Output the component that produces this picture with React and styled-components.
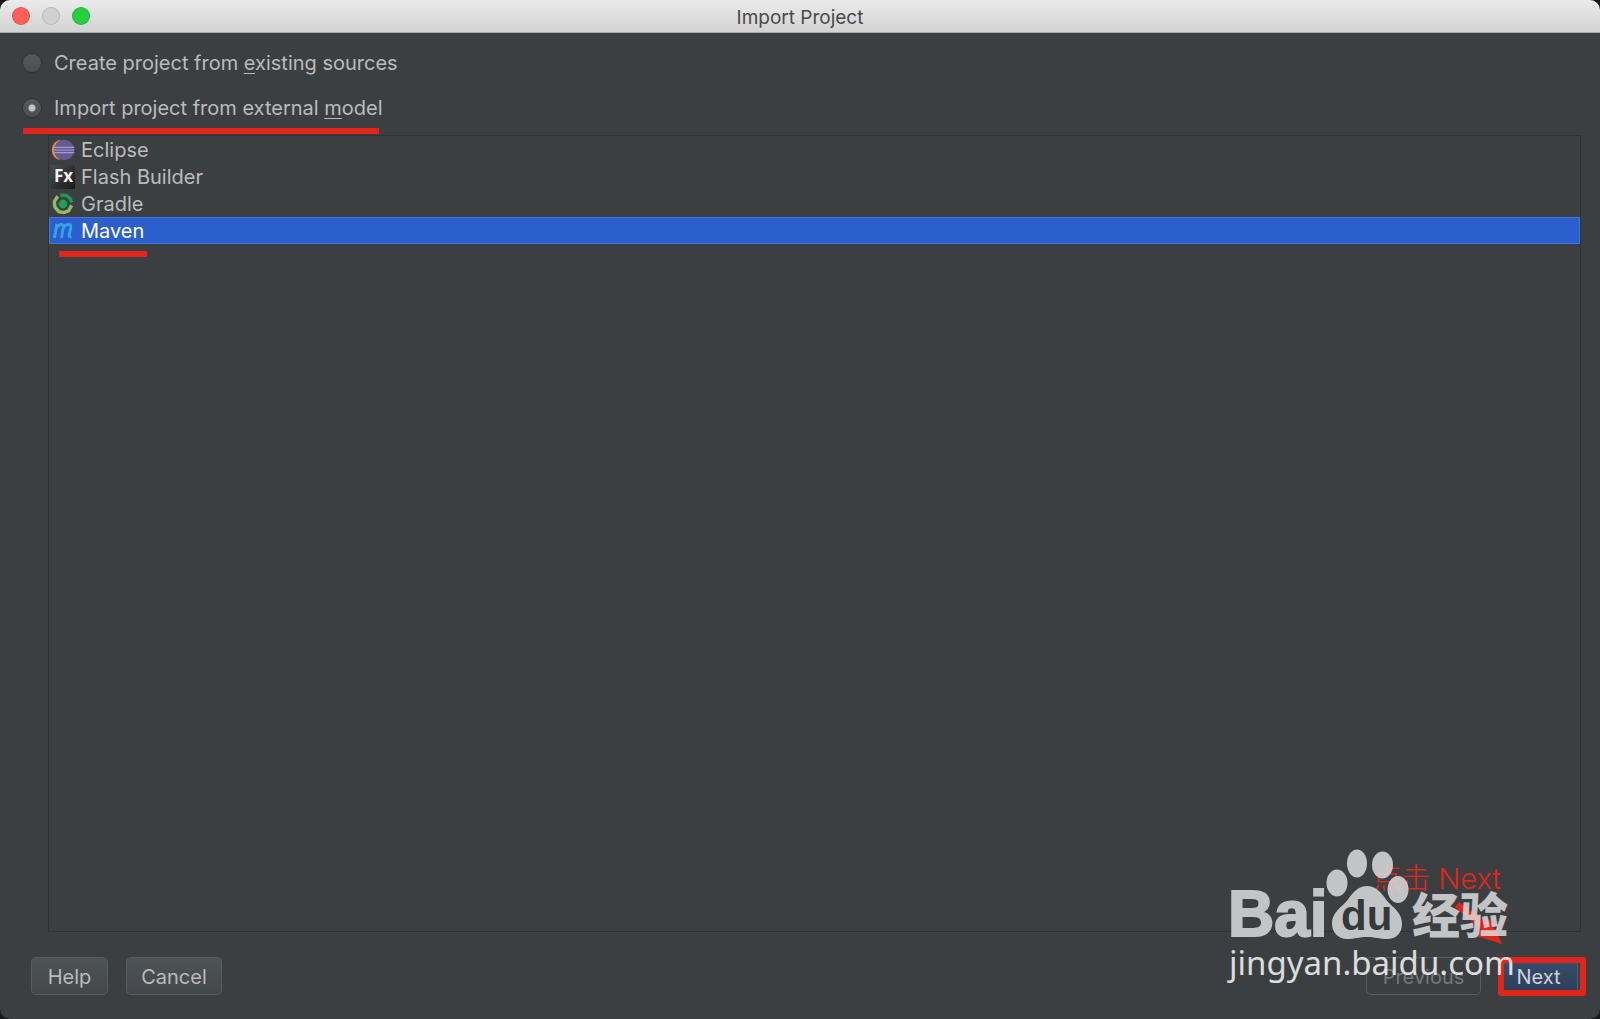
import React, { useState } from 'react';
import styled, { createGlobalStyle } from 'styled-components';

const models = ['Eclipse', 'Flash Builder', 'Gradle', 'Maven'];

const EclipseIcon = () => (
  <svg width='24' height='24' viewBox='0 0 24 24' aria-hidden='true'>
    <path d='M10 1.5A10.6 10.6 0 0 0 10 22.5A13 13 0 0 1 10 1.5z' fill='#e8913a' />
    <circle cx='13' cy='12' r='10.2' fill='#665a96' />
    <path d='M3 9.4h20.3M3 12h20.3M3 14.6h20.3' stroke='#a59dc6' strokeWidth='1.2' />
  </svg>
);

const FlashIcon = () => (
  <svg width='24' height='24' viewBox='0 0 24 24' aria-hidden='true'>
    <defs>
      <linearGradient id='flash' x1='0' y1='0' x2='1' y2='1'>
        <stop offset='0' stopColor='#4c4c4c' />
        <stop offset='1' stopColor='#191919' />
      </linearGradient>
    </defs>
    <rect width='24' height='24' fill='url(#flash)' />
    <text x='3' y='17' fontFamily='Open Sans, sans-serif' fontWeight='700' fontSize='17' fill='#f2f2f2'>
      Fx
    </text>
  </svg>
);

const GradleIcon = () => (
  <svg width='24' height='24' viewBox='0 0 24 24' aria-hidden='true'>
    <circle cx='12' cy='12' r='4.4' fill='#1fa055' />
    <path
      d='M6.8 4.2L3.4 9.4L3.8 14.8L7.8 19.6L13 20.6L17.6 18.8L20.6 13.4'
      fill='none'
      stroke='#8fbc62'
      strokeWidth='3.4'
    />
    <path d='M9.4 3L15.6 3.6L19.2 6.8L20.8 10.4' fill='none' stroke='#1f9a54' strokeWidth='3.4' />
  </svg>
);

const MavenIcon = () => (
  <svg width='24' height='24' viewBox='0 0 24 24' aria-hidden='true'>
    <path
      d='M3.4 19L6 5M5.4 9C7.6 4.8 13 4 12.4 8.2L10.4 19M12 9C14.4 4.8 20.4 4 19.8 8.2L18.2 16Q17.8 18.4 20.4 17.6'
      fill='none'
      stroke='#36a3e6'
      strokeWidth='2.9'
    />
  </svg>
);

const icons = {
  Eclipse: EclipseIcon,
  'Flash Builder': FlashIcon,
  Gradle: GradleIcon,
  Maven: MavenIcon,
};

function Watermark() {
  return (
    <WatermarkSvg width='300' height='150' viewBox='0 0 300 150' aria-label='Baidu'>
      <g fill='#e0e2e4'>
        <text
          x='4'
          y='87'
          fontFamily='Liberation Sans, sans-serif'
          fontWeight='700'
          fontSize='64'
          stroke='#e0e2e4'
          strokeWidth='2'
        >
          Bai
        </text>
        <ellipse cx='113' cy='34' rx='10.5' ry='13.5' />
        <ellipse cx='133' cy='14.5' rx='10' ry='14' />
        <ellipse cx='158.5' cy='16' rx='10.5' ry='13.5' />
        <ellipse cx='174' cy='40.5' rx='10.5' ry='13.5' />
        <path d='M143 37C151 37 156 42 161 49C167 58 178 62 178 75C178 84 172 90 163 90C155 90 151 88 143 88C135 88 131 90 123 90C114 90 108 83 108 75C108 62 119 58 125 49C130 42 135 37 143 37z' />
        <text x='188' y='84' fontFamily='Noto Sans CJK SC, sans-serif' fontWeight='900' fontSize='48'>
          经验
        </text>
      </g>
      <text x='117' y='81' fontFamily='Liberation Sans, sans-serif' fontWeight='700' fontSize='42' fill='#33373a'>
        du
      </text>
      <text x='5' y='126' fontFamily='Noto Sans, sans-serif' fontSize='33' fill='#ffffff'>
        jingyan.baidu.com
      </text>
    </WatermarkSvg>
  );
}

function App() {
  const [source, setSource] = useState('import');
  const [model, setModel] = useState('Maven');

  return (
    <>
      <GlobalStyle />
      <Window>
        <TitleBar>
          <Lights>
            <Light $color='#ff5f57' aria-label='Close' />
            <Light $color='#d0d0d0' aria-label='Minimize' />
            <Light $color='#28cd41' aria-label='Zoom' />
          </Lights>
          <h1>Import Project</h1>
        </TitleBar>
        <Content>
          <RadioRow>
            <input
              type='radio'
              name='source'
              checked={source === 'create'}
              onChange={() => setSource('create')}
            />
            <span>
              Create project from <u>e</u>xisting sources
            </span>
          </RadioRow>
          <RadioRow>
            <input
              type='radio'
              name='source'
              checked={source === 'import'}
              onChange={() => setSource('import')}
            />
            <span>
              Import project from external <u>m</u>odel
            </span>
            <Underline $left={1} $bottom={-4} $width={356} />
          </RadioRow>
          <ModelList role='listbox' aria-label='External model'>
            {models.map((name) => {
              const Icon = icons[name];
              return (
                <ModelItem
                  key={name}
                  role='option'
                  aria-selected={model === name}
                  $selected={model === name}
                  onClick={() => setModel(name)}
                >
                  <Icon />
                  <span>{name}</span>
                  {name === 'Maven' && <Underline $left={9} $bottom={-14} $width={88} />}
                </ModelItem>
              );
            })}
          </ModelList>
        </Content>
        <Footer>
          <Button $width={77}>Help</Button>
          <Button $width={96}>Cancel</Button>
          <Spacer />
          <Button $width={115} disabled>
            Previous
          </Button>
          <NextSlot>
            <Button $width={79} $primary>
              Next
            </Button>
          </NextSlot>
          <Note>点击 Next</Note>
          <Arrow width='50' height='44' viewBox='0 0 50 44' aria-hidden='true'>
            <path d='M5 1L31 21L36 18L48 43L23 35L27 28L1 6z' fill='#e0261b' />
          </Arrow>
          <Watermark />
        </Footer>
      </Window>
    </>
  );
}

const GlobalStyle = createGlobalStyle`
  * {
    box-sizing: border-box;
  }
  body {
    margin: 0;
    background: #17191a;
    font-family: Inter, 'Noto Sans CJK SC', sans-serif;
    font-size: 20px;
    color: #bbbbbb;
  }
`;

const Window = styled.main`
  display: flex;
  flex-direction: column;
  min-height: 100vh;
  overflow: hidden;
  background: #3c3f41;
  border-radius: 10px;
`;

const TitleBar = styled.header`
  position: relative;
  display: flex;
  align-items: center;
  justify-content: center;
  height: 33px;
  background: linear-gradient(#ebebeb, #d3d3d3);
  border-bottom: 1px solid #a9a9a9;
  h1 {
    margin: 0;
    padding-top: 2px;
    font-size: 19px;
    font-weight: 400;
    color: #4a4a4a;
  }
`;

const Lights = styled.div`
  position: absolute;
  left: 12px;
  display: flex;
  gap: 12px;
`;

const Light = styled.button`
  width: 18px;
  height: 18px;
  padding: 0;
  background: ${({ $color }) => $color};
  border: 1px solid rgba(0, 0, 0, 0.12);
  border-radius: 50%;
`;

const Content = styled.section`
  flex: 1;
  display: flex;
  flex-direction: column;
  padding: 7px 19px 0 22px;
`;

const RadioRow = styled.label`
  position: relative;
  align-self: flex-start;
  display: flex;
  align-items: center;
  gap: 12px;
  height: 45px;
  input {
    appearance: none;
    width: 20px;
    height: 20px;
    margin: 0;
    background: linear-gradient(#55595b, #4c5052);
    border: 1px solid #2f3233;
    border-radius: 50%;
  }
  input:checked {
    background: radial-gradient(circle, #c4c4c4 3px, transparent 4px),
      linear-gradient(#55595b, #4c5052);
  }
  u {
    text-decoration-thickness: 1px;
    text-underline-offset: 3px;
  }
`;

const Underline = styled.i`
  position: absolute;
  left: ${({ $left }) => $left}px;
  bottom: ${({ $bottom }) => $bottom}px;
  z-index: 1;
  width: ${({ $width }) => $width}px;
  height: 6px;
  background: #e0261b;
`;

const ModelList = styled.ul`
  flex: 1;
  margin: 5px 0 0 26px;
  padding: 0;
  list-style: none;
  border: 1px solid #2f3233;
`;

const ModelItem = styled.li`
  position: relative;
  display: flex;
  align-items: center;
  gap: 6px;
  height: 27px;
  padding-left: 1px;
  border: 1px solid ${({ $selected }) => ($selected ? '#3f79dc' : 'transparent')};
  background: ${({ $selected }) => ($selected ? '#2b5fce' : 'transparent')};
  color: ${({ $selected }) => ($selected ? '#ffffff' : '#bbbbbb')};
`;

const Footer = styled.footer`
  position: relative;
  display: flex;
  align-items: center;
  gap: 18px;
  height: 87px;
  padding: 0 22px 0 31px;
`;

const Spacer = styled.div`
  flex: 1;
`;

const Button = styled.button`
  width: ${({ $width }) => $width}px;
  height: 38px;
  padding: 2px 0 0;
  font: inherit;
  color: ${({ $primary }) => ($primary ? '#d0d3d6' : '#bbbbbb')};
  background: ${({ $primary }) =>
    $primary ? 'linear-gradient(#384f6f, #2b3c59)' : 'linear-gradient(#4e5355, #434749)'};
  border: 1px solid #585c5e;
  border-radius: 5px;
  &:disabled {
    color: #777777;
    background: transparent;
  }
`;

const NextSlot = styled.div`
  position: relative;
  display: flex;
  &::after {
    content: '';
    position: absolute;
    inset: 0 -8px -1px -1px;
    border: 6px solid #e0261b;
    border-radius: 3px;
    pointer-events: none;
  }
`;

const Note = styled.span`
  position: absolute;
  right: 99px;
  bottom: 123px;
  font-size: 29px;
  font-weight: 300;
  line-height: 34px;
  color: #e0261b;
`;

const Arrow = styled.svg`
  position: absolute;
  right: 96px;
  bottom: 74px;
`;

const WatermarkSvg = styled.svg`
  position: absolute;
  right: 76px;
  bottom: 20px;
  opacity: 0.82;
  pointer-events: none;
`;

export default App;
